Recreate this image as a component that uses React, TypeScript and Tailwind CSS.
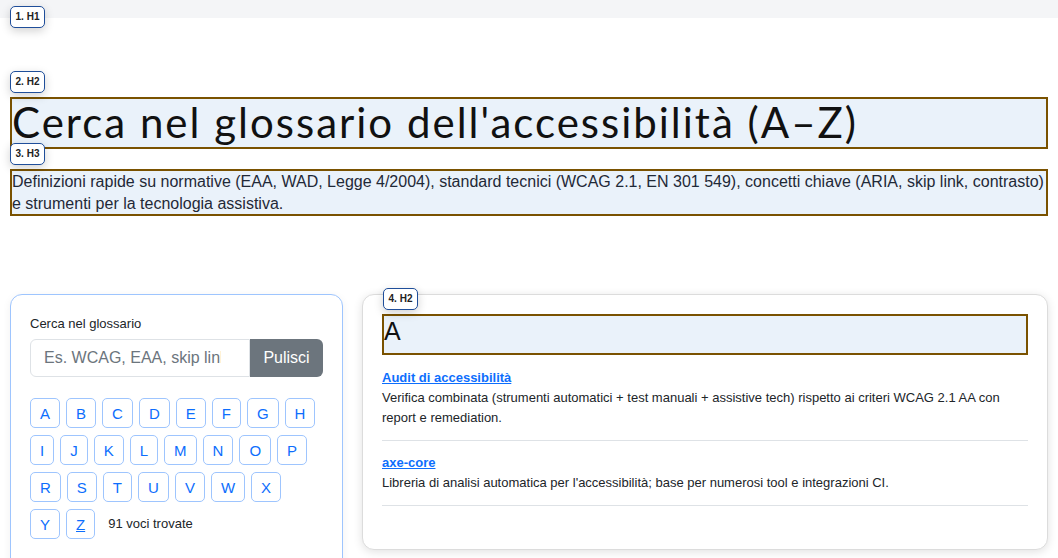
import React from "react";

// no entries under Q, so it is left out
const letters = "ABCDEFGHIJKLMNOPRSTUVWX".split("");

const entries = [
  {
    term: "Audit di accessibilità",
    text: "Verifica combinata (strumenti automatici + test manuali + assistive tech) rispetto ai criteri WCAG 2.1 AA con report e remediation.",
  },
  {
    term: "axe-core",
    text: "Libreria di analisi automatica per l'accessibilità; base per numerosi tool e integrazioni CI.",
  },
];

function Badge({ label, className }: { label: string; className: string }) {
  return (
    <span
      className={`absolute z-10 flex h-[22px] w-[35px] items-center justify-center rounded-[5px] border-[1.5px] border-[#1f4e9a] bg-white font-['Liberation_Sans',Arial,sans-serif] text-[10px] font-bold leading-none tracking-normal text-[#222] shadow-[0_3px_10px_rgba(0,0,0,0.18)] ${className}`}
    >
      {label}
    </span>
  );
}

function LetterButton({ letter, active }: { letter: string; active?: boolean }) {
  return (
    <button
      type="button"
      className={`h-[30px] rounded-[5px] border border-[#9ec5fe] bg-white px-[9px] text-[15px] leading-none text-[#0d6efd] ${
        active ? "underline" : ""
      }`}
    >
      {letter}
    </button>
  );
}

export default function App() {
  return (
    <div className="relative min-h-screen bg-white font-['Liberation_Sans',Arial,sans-serif] text-[#212529]">
      <header className="h-[18px] bg-[#f4f5f7]" />
      <Badge label="1. H1" className="left-[10px] top-[6px]" />

      <main className="px-[10px] pt-[79px]">
        <h2 className="relative h-[52px] border-2 border-[#7a5200] bg-[#eaf2fa] font-['Lato','Noto_Sans',sans-serif] text-[42px] leading-[46px] tracking-[2px] text-[#111]">
          <Badge label="2. H2" className="-top-[28px] -left-[2px]" />
          Cerca nel glossario dell'accessibilità (A–Z)
        </h2>

        <p className="relative mt-[20px] border-2 border-[#7a5200] bg-[#eaf2fa] text-[16px] leading-[21.5px] text-[#1f2937]">
          <Badge label="3. H3" className="-top-[28px] -left-[2px]" />
          Definizioni rapide su normative (EAA, WAD, Legge 4/2004), standard tecnici (WCAG 2.1, EN 301 549), concetti
          chiave (ARIA, skip link, contrasto) e strumenti per la tecnologia assistiva.
        </p>

        <div className="mt-[78px] flex items-start gap-[19px]">
          {/* search panel */}
          <aside className="h-[300px] w-[333px] shrink-0 rounded-[12px] border border-[#9ec5fe] bg-white px-[19px] pt-[20px] shadow-[0_2px_8px_rgba(0,0,0,0.06)]">
            <label className="mb-[6px] block text-[13px] leading-[18px]">Cerca nel glossario</label>
            <div className="flex h-[38px]">
              <input
                type="text"
                placeholder="Es. WCAG, EAA, skip link"
                className="w-[220px] rounded-l-[6px] border border-[#dee2e6] bg-white pl-[13px] pr-[28px] text-[16px] text-[#212529] outline-none placeholder:text-[#6c757d]"
              />
              <button
                type="button"
                className="flex-1 rounded-r-[6px] bg-[#6c757d] px-[12px] text-[16px] text-white"
              >
                Pulisci
              </button>
            </div>

            <nav className="mt-[21px] flex flex-wrap gap-x-[6px] gap-y-[7px]">
              {letters.map((l) => (
                <LetterButton key={l} letter={l} />
              ))}
              <div className="flex items-center gap-[6px]">
                <LetterButton letter="Y" />
                <LetterButton letter="Z" active />
                <span className="ml-[7px] text-[13px]">91 voci trovate</span>
              </div>
            </nav>
          </aside>

          {/* results */}
          <section className="h-[256px] flex-1 rounded-[12px] border border-[#dcdcdc] bg-white px-[19px] pt-[19px] shadow-[0_2px_10px_rgba(0,0,0,0.12)]">
            <h2 className="relative h-[41px] border-2 border-[#7a5200] bg-[#eaf2fa] pb-[7px] text-[25px] leading-[30px] text-[#111]">
              <Badge label="4. H2" className="-top-[28px] -left-[1px]" />
              A
            </h2>
            <ul>
              {entries.map((e, i) => (
                <li
                  key={e.term}
                  className={`border-b border-[#dee2e6] pb-[12px] text-[13px] leading-[20px] ${
                    i === 0 ? "pt-[13px]" : "pt-[12px]"
                  }`}
                >
                  <a href="#" className="block font-bold text-[#0d6efd] underline">
                    {e.term}
                  </a>
                  <p>{e.text}</p>
                </li>
              ))}
            </ul>
          </section>
        </div>
      </main>
    </div>
  );
}
